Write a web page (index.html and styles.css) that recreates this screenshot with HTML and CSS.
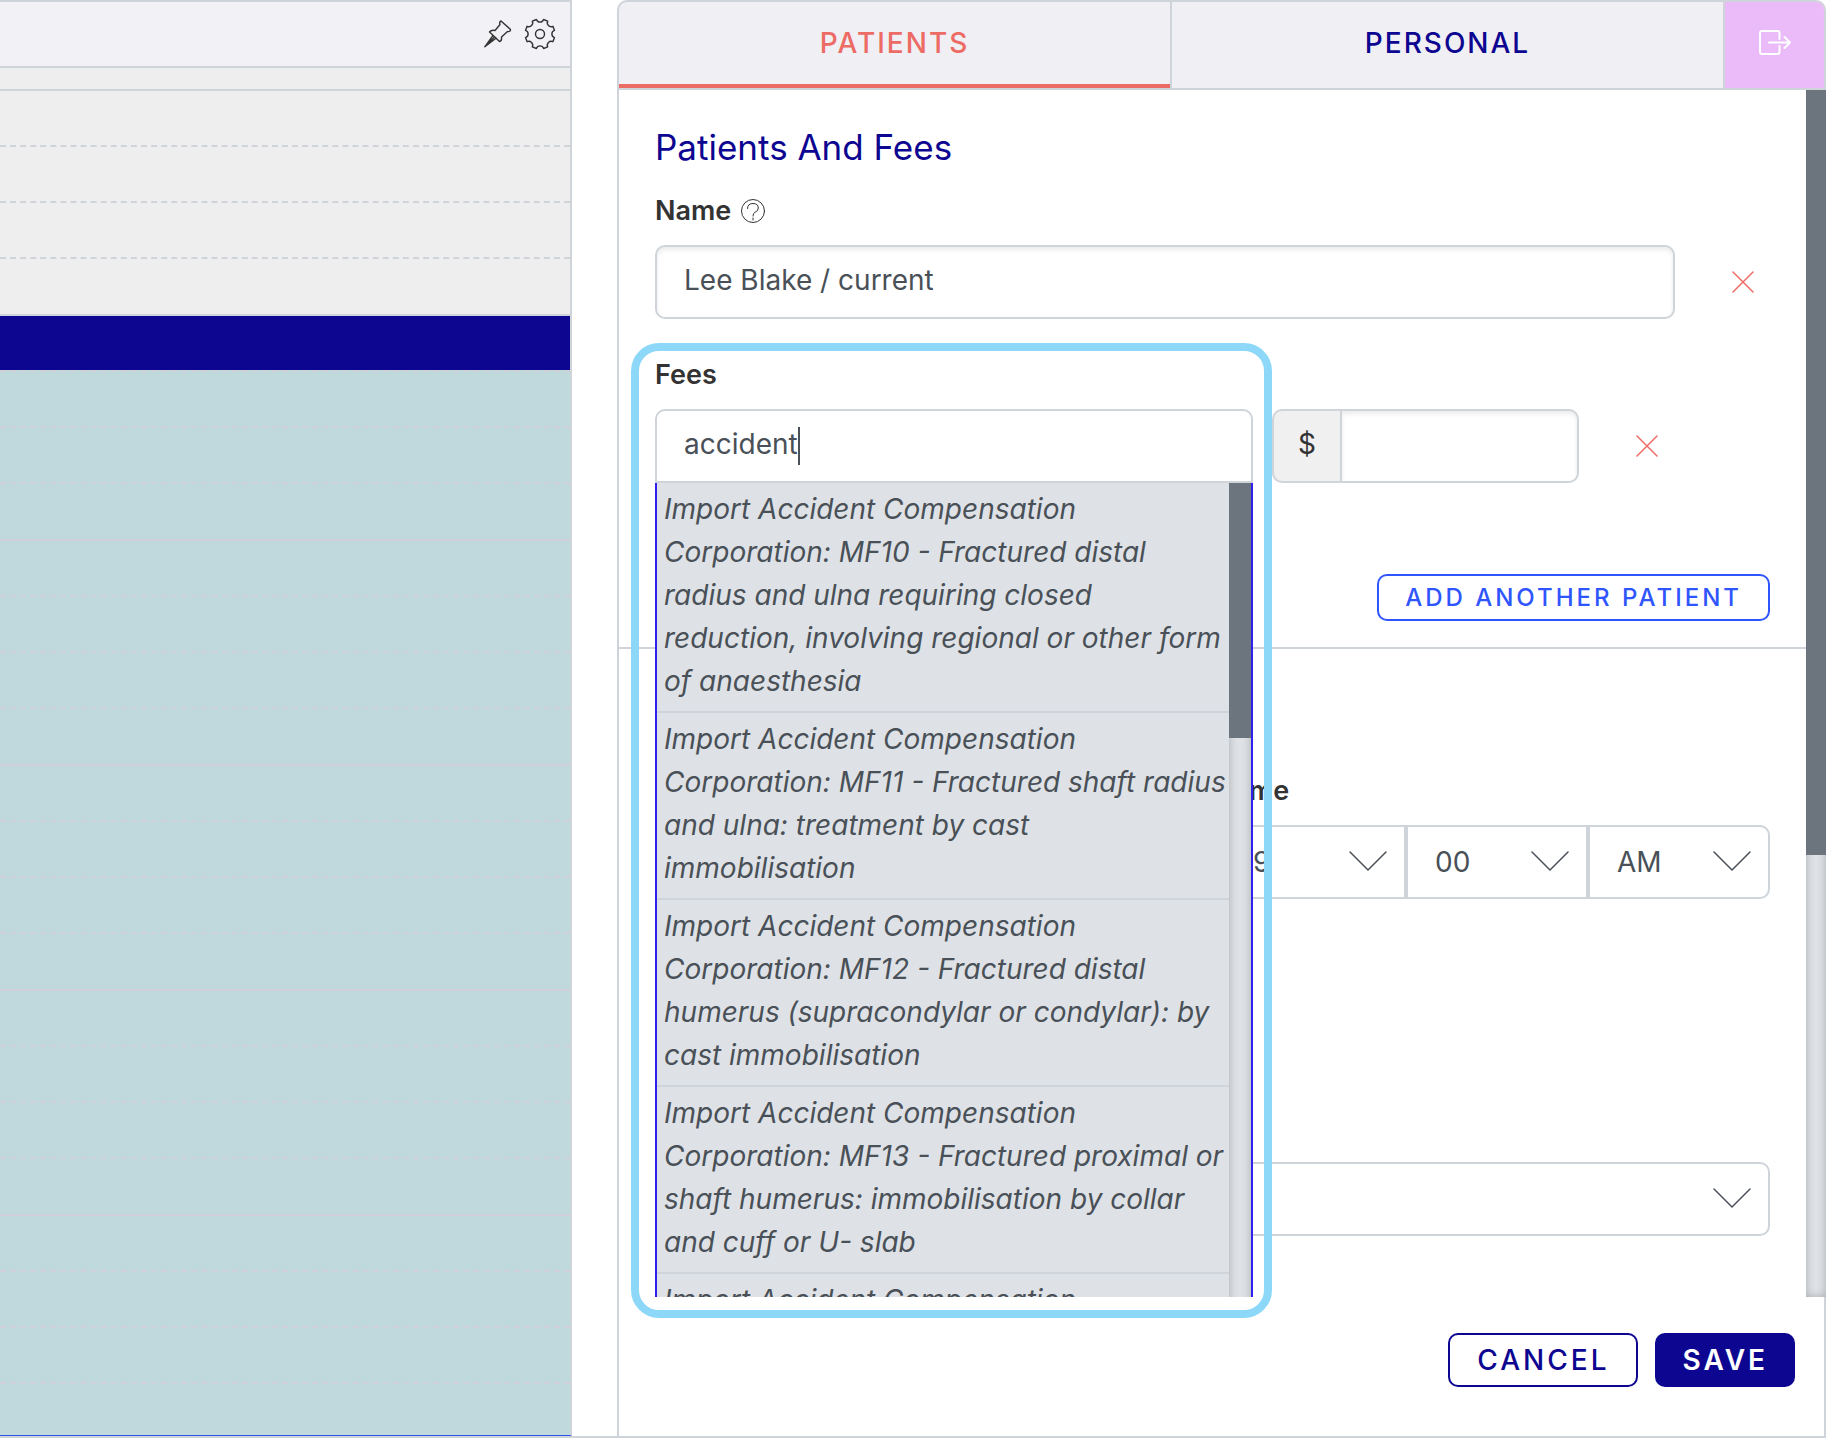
FILE: index.html
```html
<!DOCTYPE html>
<html lang="en">
<head>
  <meta charset="utf-8">
  <title>Appointment</title>
  <link rel="stylesheet" href="styles.css">
</head>
<body>
  <div class="app">

    <!-- Diary column -->
    <section class="diary">
      <header class="diary-header">
        <button class="icon-btn" aria-label="Pin column">
          <svg width="28" height="28" viewBox="0 0 28 28">
            <path d="M17 1 L26.5 9.5 Q26.5 12 23.5 11.5 L17.5 17 Q18 21 15.5 21.5 L5.5 12 Q7.5 9.5 11 10.5 L16 4.5 Q15 2 17 1Z"/>
            <path d="M9 15.5 L0.8 26.8 L12 18.2 M10.5 17 L0.8 26.8"/>
          </svg>
        </button>
        <button class="icon-btn" aria-label="Settings">
          <svg width="32" height="32" viewBox="0 0 32 32">
            <path d="M12.4 1.5 C13.6 5 18.4 5 19.6 1.5 L23.7 3.1 C22.1 6.5 25.5 9.9 28.9 8.3 L30.5 12.4 C27 13.6 27 18.4 30.5 19.6 L28.9 23.7 C25.5 22.1 22.1 25.5 23.7 28.9 L19.6 30.5 C18.4 27 13.6 27 12.4 30.5 L8.3 28.9 C9.9 25.5 6.5 22.1 3.1 23.7 L1.5 19.6 C5 18.4 5 13.6 1.5 12.4 L3.1 8.3 C6.5 9.9 9.9 6.5 8.3 3.1Z"/>
            <circle cx="16" cy="16" r="4.5"/>
          </svg>
        </button>
      </header>
      <div class="diary-allday"></div>
      <div class="hour closed">
        <div class="slot"></div>
        <div class="slot"></div>
        <div class="slot"></div>
        <div class="slot"></div>
      </div>
      <div class="hour">
        <div class="slot selected"></div>
        <div class="slot"></div>
        <div class="slot"></div>
        <div class="slot"></div>
      </div>
      <div class="hour">
        <div class="slot"></div>
        <div class="slot"></div>
        <div class="slot"></div>
        <div class="slot"></div>
      </div>
      <div class="hour">
        <div class="slot"></div>
        <div class="slot"></div>
        <div class="slot"></div>
        <div class="slot"></div>
      </div>
      <div class="hour">
        <div class="slot"></div>
        <div class="slot"></div>
        <div class="slot"></div>
        <div class="slot"></div>
      </div>
      <div class="hour">
        <div class="slot"></div>
        <div class="slot"></div>
        <div class="slot"></div>
        <div class="slot"></div>
      </div>
    </section>

    <!-- Appointment panel -->
    <form class="panel">
      <nav class="tabs">
        <button type="button" class="tab active">PATIENTS</button>
        <button type="button" class="tab">PERSONAL</button>
        <button type="button" class="tab-exit" aria-label="Close panel">
          <svg width="34" height="26" viewBox="0 0 34 26">
            <path d="M21.5 9 V3 Q21.5 1 19.5 1 H4 Q2 1 2 3 V22 Q2 24 4 24 H19.5 Q21.5 24 21.5 22 V16"/>
            <path d="M11 12.5 H32 M26.5 7 L32 12.5 L26.5 18"/>
          </svg>
        </button>
      </nav>

      <div class="panel-body">
        <div class="panel-scroll">
          <section class="patients">
            <h2>Patients And Fees</h2>
            <div class="label-row">
              <label for="patientName">Name</label>
              <svg class="help" width="24" height="24" viewBox="0 0 24 24">
                <circle cx="12" cy="12" r="11.5"/>
                <path d="M6.5 9.5 Q6.5 4.5 12 4.5 Q17.3 4.5 17.3 9 Q17.3 12 14 13.3 Q12 14 12 17"/>
                <path d="M12 19 V21"/>
              </svg>
            </div>
            <div class="name-row">
              <input class="control" id="patientName" type="text" value="Lee Blake / current">
              <button type="button" class="remove" aria-label="Remove patient">
                <svg width="22" height="22" viewBox="0 0 22 22"><path d="M1 1 L21 21 M21 1 L1 21"/></svg>
              </button>
            </div>

            <div class="label-row fees-label">
              <label for="fee">Fees</label>
            </div>
            <div class="fee-row">
              <div class="combo">
                <input class="control" id="fee" type="text" value="accident" autocomplete="off">
                <span class="caret"></span>
                <div class="dropdown">
                  <ul class="options">
                    <li>Import Accident Compensation Corporation: MF10 - Fractured distal radius and ulna requiring closed reduction, involving regional or other form of anaesthesia</li>
                    <li>Import Accident Compensation Corporation: MF11 - Fractured shaft radius and ulna: treatment by cast<br>immobilisation</li>
                    <li>Import Accident Compensation Corporation: MF12 - Fractured distal humerus (supracondylar or condylar): by cast immobilisation</li>
                    <li>Import Accident Compensation Corporation: MF13 - Fractured proximal or shaft humerus: immobilisation by collar and cuff or U- slab</li>
                    <li>Import Accident Compensation</li>
                  </ul>
                  <div class="scrollbar"><div class="thumb"></div></div>
                </div>
              </div>
              <div class="amount">
                <label class="currency" for="amount">$</label>
                <input class="control" id="amount" type="text">
              </div>
              <button type="button" class="remove" aria-label="Remove fee">
                <svg width="22" height="22" viewBox="0 0 22 22"><path d="M1 1 L21 21 M21 1 L1 21"/></svg>
              </button>
            </div>

            <div class="add-row">
              <button type="button" class="btn btn-small">ADD ANOTHER PATIENT</button>
            </div>
          </section>

          <section class="details">
            <div class="time-group">
              <div class="label-row">
                <label for="hour">Time</label>
              </div>
              <div class="time-row">
                <div class="select">
                  <select id="hour"><option>9</option></select>
                  <svg width="38" height="22" viewBox="0 0 38 22"><path d="M1 1 L19 19 L37 1"/></svg>
                </div>
                <div class="select">
                  <select aria-label="Minutes"><option>00</option></select>
                  <svg width="38" height="22" viewBox="0 0 38 22"><path d="M1 1 L19 19 L37 1"/></svg>
                </div>
                <div class="select">
                  <select aria-label="AM or PM"><option>AM</option></select>
                  <svg width="38" height="22" viewBox="0 0 38 22"><path d="M1 1 L19 19 L37 1"/></svg>
                </div>
              </div>
            </div>
            <div class="select select-wide">
              <select aria-label="Appointment type"><option></option></select>
              <svg width="38" height="22" viewBox="0 0 38 22"><path d="M1 1 L19 19 L37 1"/></svg>
            </div>
          </section>
        </div>
        <div class="scrollbar"><div class="thumb"></div></div>
      </div>

      <footer class="panel-footer">
        <button type="button" class="btn">CANCEL</button>
        <button type="submit" class="btn btn-primary">SAVE</button>
      </footer>

      <div class="highlight"></div>
    </form>
  </div>
</body>
</html>
```
FILE: styles.css
```css
* {
  box-sizing: border-box;
}

body {
  margin: 0;
  font-family: Inter, "Liberation Sans", sans-serif;
  font-size: 28px;
  color: #333;
  background: #fff;
}

button, input, select {
  font-family: inherit;
  font-size: inherit;
  margin: 0;
}

button {
  cursor: pointer;
}

svg {
  display: block;
  fill: none;
  stroke: currentColor;
  stroke-linecap: round;
  stroke-linejoin: round;
}

.app {
  display: flex;
  gap: 45px;
  height: 100vh;
  border-bottom: 2px solid #ced4da;
}

/* Diary */
.diary {
  flex: 0 0 572px;
  overflow: hidden;
  border-top: 2px solid #ced4da;
  border-right: 2px solid #ced4da;
  border-bottom: 1px solid #2f55e8;
}

.diary-header {
  display: flex;
  align-items: center;
  justify-content: flex-end;
  gap: 12px;
  height: 66px;
  padding-right: 14px;
  background: #f2f1f6;
  border-bottom: 2px solid #ced4da;
}

.icon-btn {
  padding: 0;
  border: none;
  background: none;
  color: #333;
}

.icon-btn svg {
  stroke-width: 1.4;
}

.diary-allday {
  height: 23px;
  background: #eee;
  border-bottom: 2px solid #ced4da;
}

.hour {
  display: grid;
  grid-template-rows: repeat(3, 56px) 57px;
  background: #c0d9dd;
}

.slot {
  border-bottom: 2px dashed #cfd0da;
}

.slot:last-child {
  border-bottom-style: solid;
}

.closed {
  background: #eee;
}

.closed .slot {
  border-color: #ced4da;
}

.selected {
  background: #0d0691;
  background-clip: padding-box;
}

/* Panel */
.panel {
  position: relative;
  flex: 1;
  min-width: 0;
  display: flex;
  flex-direction: column;
}

.tabs {
  display: flex;
  height: 90px;
  border: 2px solid #ced4da;
  border-radius: 10px 10px 0 0;
  background: #f0eff4;
  overflow: hidden;
}

.tab {
  flex: 1;
  padding: 0 0 4px;
  border: none;
  border-right: 2px solid #ced4da;
  background: none;
  color: #0d0691;
  font-weight: 500;
  letter-spacing: 2px;
}

.tab.active {
  color: #ed6b65;
  box-shadow: inset 0 -4px #ed6b65;
}

.tab-exit {
  display: flex;
  align-items: center;
  justify-content: center;
  width: 99px;
  padding: 0 0 4px;
  border: none;
  background: #eabbf8;
  color: #fff;
}

.tab-exit svg {
  stroke-width: 2;
}

.panel-body {
  flex: 1;
  min-height: 0;
  display: flex;
  overflow: hidden;
  border-left: 2px solid #ced4da;
}

.panel-scroll {
  flex: 1;
  min-width: 0;
}

.scrollbar {
  flex: none;
  width: 20px;
  background: #dee2e6;
  box-shadow: inset 0 0 8px rgba(0, 0, 0, 0.25);
}

.thumb {
  height: 765px;
  background: #6c757d;
}

.patients {
  padding: 37px 36px 26px;
  border-bottom: 2px solid #ced4da;
}

h2 {
  margin: 0 0 28px;
  font-size: 35px;
  line-height: 40px;
  font-weight: 400;
  color: #0d0691;
}

.label-row {
  display: flex;
  align-items: center;
  gap: 10px;
  margin-bottom: 18px;
  font-size: 27px;
  line-height: 32px;
  font-weight: 600;
}

.help {
  stroke-width: 1;
}

.name-row,
.fee-row {
  display: flex;
  gap: 41px;
}

.control {
  flex: 1;
  min-width: 0;
  width: 100%;
  height: 74px;
  padding: 0 27px 4px;
  border: 2px solid #ced4da;
  border-radius: 10px;
  background: #fff;
  color: #495057;
  box-shadow: inset 0 3px 4px rgba(0, 0, 0, 0.08);
  outline: none;
}

.remove {
  display: flex;
  align-items: center;
  justify-content: center;
  width: 54px;
  padding: 0;
  border: none;
  background: none;
  color: #ed6b65;
}

.remove svg {
  stroke-width: 1.5;
}

.fees-label {
  margin-top: 40px;
}

.fee-row {
  margin-right: 96px;
}

.combo {
  position: relative;
  flex: 1;
  margin-right: -22px;
}

.combo .control {
  display: block;
  border-radius: 10px 10px 0 0;
  box-shadow: none;
}

.caret {
  position: absolute;
  top: 18px;
  left: 143px;
  width: 2px;
  height: 38px;
  background: #495057;
}

.dropdown {
  position: absolute;
  z-index: 2;
  top: 100%;
  left: 0;
  right: 0;
  display: flex;
  height: 860px;
  border: solid #2e21f0;
  border-width: 0 2px;
  background: #dee2e6;
}

.dropdown .scrollbar {
  width: 22px;
}

.dropdown .thumb {
  height: 255px;
}

.options {
  flex: 1;
  min-width: 0;
  margin: 0;
  padding: 0;
  list-style: none;
  font-style: italic;
  line-height: 43px;
  color: #495057;
}

.options li {
  padding: 5px 0 8px 7px;
  border-bottom: 2px solid #ced4da;
}

.amount {
  display: flex;
  width: 307px;
}

.currency {
  display: flex;
  align-items: center;
  justify-content: center;
  width: 68px;
  padding-bottom: 4px;
  border: 2px solid #ced4da;
  border-right: none;
  border-radius: 10px 0 0 10px;
  background: #f0f0f0;
}

.amount .control {
  border-radius: 0 10px 10px 0;
}

.add-row {
  display: flex;
  justify-content: flex-end;
  margin-top: 91px;
}

.btn {
  height: 54px;
  padding: 0 27px;
  border: 2px solid #0d0691;
  border-radius: 10px;
  background: #fff;
  color: #0d0691;
  font-size: 28px;
  font-weight: 500;
  letter-spacing: 3px;
}

.btn-primary {
  padding: 0 25px;
  background: #0d0691;
  color: #fff;
  font-weight: 600;
}

.btn-small {
  height: 47px;
  padding: 0 26px;
  border-color: #2f55ff;
  color: #2f55ff;
  font-size: 24px;
}

.details {
  padding: 126px 36px 0;
}

.time-group {
  width: 546px;
  margin-left: auto;
}

.time-row {
  display: flex;
}

.select {
  position: relative;
  flex: 1;
}

.select select {
  display: block;
  width: 100%;
  height: 74px;
  padding: 0 27px;
  border: 2px solid #ced4da;
  background: #fff;
  color: #495057;
  appearance: none;
}

.select svg {
  position: absolute;
  top: 26px;
  right: 19px;
  color: #495057;
  stroke-width: 1.5;
  pointer-events: none;
}

.select:last-child select {
  border-radius: 0 10px 10px 0;
}

.select-wide {
  margin-top: 263px;
}

.panel-footer {
  display: flex;
  justify-content: flex-end;
  align-items: flex-start;
  gap: 17px;
  height: 139px;
  padding: 36px 29px 0;
  border: solid #ced4da;
  border-width: 0 2px;
}

/* Callout ring round the fees search */
.highlight {
  position: absolute;
  z-index: 3;
  top: 343px;
  left: 14px;
  bottom: 118px;
  width: 641px;
  border: 8px solid #8dd8f8;
  border-radius: 28px;
  pointer-events: none;
}
```
